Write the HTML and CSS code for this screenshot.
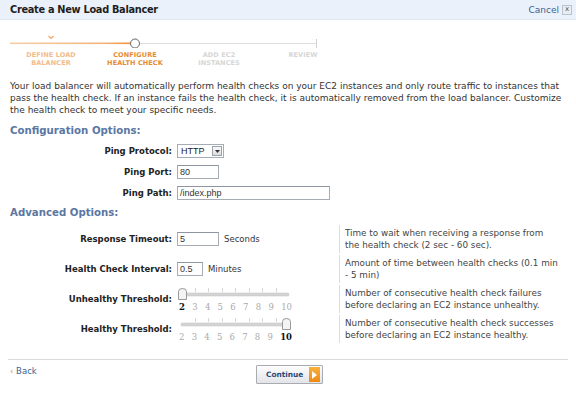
FILE: index.html
```html
<!DOCTYPE html>
<html>
<head>
<meta charset="utf-8">
<link rel="stylesheet" href="styles.css">
</head>
<body>
<div class="header">
  <h1 class="title">Create a New Load Balancer</h1>
  <a class="cancel">Cancel <span class="close">x</span></a>
</div>

<div class="stepper">
  <svg class="track" width="330" height="18" viewBox="0 0 330 18">
    <defs>
      <linearGradient id="done" x1="0" x2="1" y1="0" y2="0">
        <stop offset="0" stop-color="#f5cfa8"/>
        <stop offset="0.8" stop-color="#f2b27a"/>
        <stop offset="1" stop-color="#f58f2e"/>
      </linearGradient>
    </defs>
    <line x1="10" y1="13.5" x2="317" y2="13.5" stroke="#dedede" stroke-width="1"/>
    <rect x="10" y="12.5" width="121" height="1.6" fill="url(#done)"/>
    <path d="M48.5 6 L51 8.5 L53.5 6" fill="none" stroke="#efa564" stroke-width="1.2"/>
    <circle cx="135" cy="13.5" r="4.5" fill="#fff" stroke="#666" stroke-width="1"/>
    <line x1="316.5" y1="9" x2="316.5" y2="18" stroke="#d0d0d0" stroke-width="1"/>
  </svg>
  <div class="step-labels">
    <div class="step done">DEFINE LOAD<br>BALANCER</div>
    <div class="step current">CONFIGURE<br>HEALTH CHECK</div>
    <div class="step todo">ADD EC2<br>INSTANCES</div>
    <div class="step todo">REVIEW</div>
  </div>
</div>

<p class="intro">Your load balancer will automatically perform health checks on your EC2 instances and only route traffic to instances that pass the health check. If an instance fails the health check, it is automatically removed from the load balancer. Customize the health check to meet your specific needs.</p>

<h2 class="section">Configuration Options:</h2>
<div class="form config">
  <label class="lbl">Ping Protocol:</label>
  <div class="field">
    <span class="select"><span class="select-val">HTTP</span><span class="select-btn"><svg width="5" height="3" viewBox="0 0 5 3"><path d="M0 0H5L2.5 3Z" fill="#333"/></svg></span></span>
  </div>
  <label class="lbl">Ping Port:</label>
  <div class="field"><span class="input w42">80</span></div>
  <label class="lbl">Ping Path:</label>
  <div class="field"><span class="input w152">/index.php</span></div>
</div>

<h2 class="section adv">Advanced Options:</h2>
<div class="form advanced">
  <label class="lbl">Response Timeout:</label>
  <div class="field"><span class="input w42">5</span><span class="unit">Seconds</span></div>
  <div class="help">Time to wait when receiving a response from<br>the health check (2 sec - 60 sec).</div>

  <label class="lbl">Health Check Interval:</label>
  <div class="field"><span class="input w25">0.5</span><span class="unit">Minutes</span></div>
  <div class="help">Amount of time between health checks (0.1 min<br>- 5 min)</div>

  <label class="lbl lbl-slider">Unhealthy Threshold:</label>
  <div class="field">
    <div class="slider">
      <svg width="116" height="14" viewBox="0 0 116 14">
        <rect x="2" y="6" width="110" height="3" rx="1" fill="#d4d4d4" stroke="#c2c2c2" stroke-width="0.5"/>
        <g stroke="#d6d6d6" stroke-width="1">
          <line x1="18.5" y1="1" x2="18.5" y2="5"/><line x1="31.5" y1="1" x2="31.5" y2="5"/>
          <line x1="45.5" y1="1" x2="45.5" y2="5"/><line x1="58.5" y1="1" x2="58.5" y2="5"/>
          <line x1="72.5" y1="1" x2="72.5" y2="5"/><line x1="85.5" y1="1" x2="85.5" y2="5"/>
          <line x1="99.5" y1="1" x2="99.5" y2="5"/>
        </g>
        <path d="M1.5 4.5 Q1.5 1.5 5.5 1.5 Q9.5 1.5 9.5 4.5 V12.5 H1.5 Z" fill="#f4f4f4" stroke="#999" stroke-width="1"/>
      </svg>
      <div class="ticks"><b>2</b><span>3</span><span>4</span><span>5</span><span>6</span><span>7</span><span>8</span><span>9</span><span>10</span></div>
    </div>
  </div>
  <div class="help">Number of consecutive health check failures<br>before declaring an EC2 instance unhealthy.</div>

  <label class="lbl lbl-slider">Healthy Threshold:</label>
  <div class="field">
    <div class="slider">
      <svg width="116" height="14" viewBox="0 0 116 14">
        <rect x="4" y="6" width="108" height="3" rx="1" fill="#d4d4d4" stroke="#c2c2c2" stroke-width="0.5"/>
        <g stroke="#d6d6d6" stroke-width="1">
          <line x1="18.5" y1="1" x2="18.5" y2="5"/><line x1="31.5" y1="1" x2="31.5" y2="5"/>
          <line x1="45.5" y1="1" x2="45.5" y2="5"/><line x1="58.5" y1="1" x2="58.5" y2="5"/>
          <line x1="72.5" y1="1" x2="72.5" y2="5"/><line x1="85.5" y1="1" x2="85.5" y2="5"/>
          <line x1="99.5" y1="1" x2="99.5" y2="5"/>
        </g>
        <path d="M105.5 4.5 Q105.5 1.5 109.5 1.5 Q113.5 1.5 113.5 4.5 V12.5 H105.5 Z" fill="#f4f4f4" stroke="#999" stroke-width="1"/>
      </svg>
      <div class="ticks"><span>2</span><span>3</span><span>4</span><span>5</span><span>6</span><span>7</span><span>8</span><span>9</span><b>10</b></div>
    </div>
  </div>
  <div class="help">Number of consecutive health check successes<br>before declaring an EC2 instance healthy.</div>
</div>

<div class="footer">
  <a class="back"><span class="chev">&lsaquo;</span> Back</a>
  <button class="continue">Continue <span class="arrow"><svg width="5" height="8" viewBox="0 0 5 8"><path d="M0 0L5 4L0 8Z" fill="#fff"/></svg></span></button>
</div>
</body>
</html>
```

FILE: styles.css
```css
* { box-sizing: border-box; }
html, body { margin: 0; padding: 0; background: #fff; }
body {
  width: 576px;
  height: 417px;
  overflow: hidden;
  font-family: "DejaVu Sans", Verdana, sans-serif;
  font-size: 8.5px;
  color: #333;
}
.header {
  height: 20px;
  background: #eaf1fb;
  border-bottom: 1px solid #dfe7f2;
  display: flex;
  align-items: center;
  justify-content: space-between;
  padding: 0 4px 0 10px;
}
.title {
  margin: 0;
  font-size: 9.8px;
  letter-spacing: -0.3px;
  font-weight: bold;
  color: #1e1e1e;
}
.cancel {
  display: flex;
  align-items: center;
  gap: 3px;
  color: #3d5f94;
  font-size: 9px;
}
.close {
  display: inline-flex;
  align-items: center;
  justify-content: center;
  width: 10px;
  height: 10px;
  border: 1px solid #b9c3cf;
  background: #e9edf2;
  color: #555;
  font-size: 7px;
  line-height: 1;
}
.stepper { padding-top: 10px; }
.track { display: block; }
.step-labels {
  display: grid;
  grid-template-columns: repeat(4, 84px);
  margin-left: 9px;
  margin-top: 3px;
}
.step {
  text-align: center;
  font-size: 6.5px;
  font-weight: bold;
  line-height: 8px;
  letter-spacing: 0.1px;
}
.step.done { color: #f2bc8c; }
.step.current { color: #e58a35; }
.step.todo { color: #d6d6d6; }
.intro {
  margin: 13px 10px 0 10px;
  font-size: 9px;
  line-height: 12px;
  color: #333;
}
.section {
  margin: 9px 0 0 10px;
  font-size: 10.2px;
  line-height: 12px;
  font-weight: bold;
  color: #5b77a3;
}
.section.adv { margin-top: 7px; }
.form {
  display: grid;
  grid-template-columns: 172px 167px 1fr;
  align-items: center;
}
.form.config { grid-template-columns: 172px 1fr; row-gap: 7px; margin-top: 7px; }
.form.advanced { row-gap: 2px; margin-top: 6px; }
.lbl {
  text-align: right;
  font-weight: bold;
  color: #222;
  font-size: 8.5px;
}
.field {
  padding-left: 5px;
  display: flex;
  align-items: center;
  gap: 5px;
}
.select {
  display: inline-flex;
  align-items: center;
  height: 14px;
  width: 47px;
  border: 1px solid #a5acb5;
  background: #fff;
}
.select-val { flex: 1; padding-left: 3px; color: #222; font-family: "Liberation Sans", Arial, sans-serif; font-size: 9px; }
.select-btn {
  width: 10px;
  height: 10px;
  margin-right: 1px;
  border: 1px solid #9aa3ad;
  background: linear-gradient(#fafafa, #dcdcdc);
  display: flex;
  align-items: center;
  justify-content: center;
}
.input {
  display: inline-block;
  height: 14px;
  border: 1px solid #a5acb5;
  border-top-color: #8d96a0;
  background: #fff;
  padding: 0 2px;
  line-height: 12px;
  font-family: "Liberation Sans", Arial, sans-serif;
  font-size: 9px;
  color: #333;
}
.w42 { width: 42px; }
.w25 { width: 26px; }
.w152 { width: 153px; }
.unit { color: #333; }
.help {
  border-left: 1px solid #dcdcdc;
  padding: 2px 0 2px 5px;
  font-size: 8.8px;
  line-height: 12px;
  min-height: 28px;
  color: #444;
  white-space: nowrap;
}
.slider { width: 116px; }
.slider svg { display: block; }
.ticks {
  display: flex;
  justify-content: space-between;
  padding: 0 1px 0 2px;
  margin-top: 1px;
  font-family: "DejaVu Serif", Georgia, serif;
  font-size: 8.5px;
  line-height: 10px;
  color: #aaa;
}
.ticks b { color: #111; }
.footer {
  margin: 16px 8px 0 8px;
  border-top: 1px solid #dadada;
  display: grid;
  grid-template-columns: 1fr auto 1fr;
  align-items: start;
  padding-top: 5px;
}
.back {
  color: #3d5f94;
  padding-left: 2px;
  margin-top: 1px;
  font-size: 8.5px;
  line-height: 11px;
}
.chev { color: #e8914a; }
.continue {
  justify-self: center;
  width: 67px;
  height: 19px;
  margin-left: 3px;
  border: 1px solid #a8acb2;
  border-radius: 1px;
  background: linear-gradient(#fdfdfd, #e2e4e8);
  display: flex;
  align-items: center;
  justify-content: space-between;
  padding: 0 2px 0 9px;
  font-family: "DejaVu Sans", sans-serif;
  font-size: 7.4px;
  font-weight: bold;
  color: #2c4b78;
}
.arrow {
  width: 11px;
  height: 15px;
  background: linear-gradient(#f9b13c, #ef8a12);
  display: flex;
  align-items: center;
  justify-content: center;
}
.footer .continue { grid-column: 2; }
```
